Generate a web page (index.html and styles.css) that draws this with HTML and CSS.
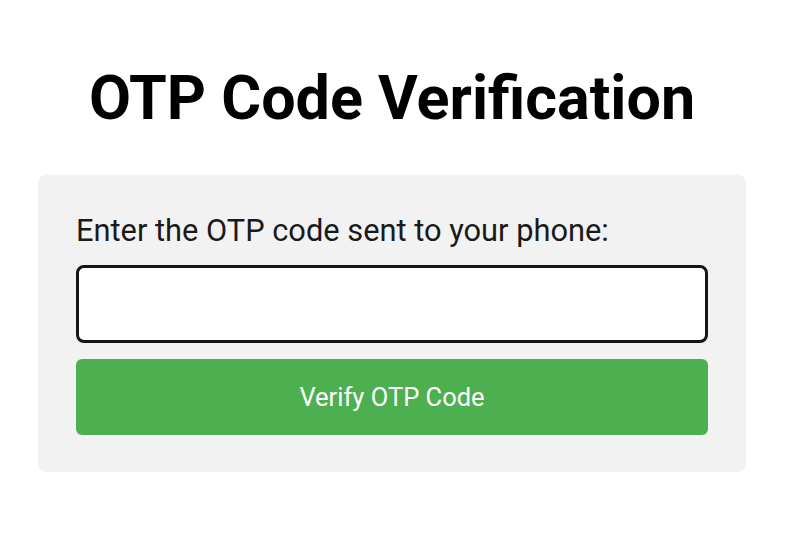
FILE: index.html
```html
<!DOCTYPE html>
<html lang="en">
<head>
  <meta charset="UTF-8">
  <title>OTP Code Verification</title>
  <link rel="stylesheet" href="styles.css">
</head>
<body>
  <div class="page">
    <h1>OTP Code Verification</h1>
    <form class="otp-form">
      <label for="otp">Enter the OTP code sent to your phone:</label>
      <input type="text" id="otp" name="otp">
      <button type="submit">Verify OTP Code</button>
    </form>
  </div>
</body>
</html>
```

FILE: styles.css
```css
body {
  margin: 0;
  font-family: Roboto, "Liberation Sans", sans-serif;
  background: #ffffff;
  color: #000000;
}
.page {
  width: 708px;
  margin-left: 38px;
  padding-top: 61px;
}
h1 {
  margin: 0 0 39px;
  text-align: center;
  font-size: 61px;
  font-weight: 700;
  line-height: 75px;
}
.otp-form {
  display: flex;
  flex-direction: column;
  padding: 38px 38px 37px;
  background: #f2f2f2;
  border-radius: 8px;
}
label {
  font-size: 30.8px;
  line-height: 36px;
  color: #1a1a1a;
  margin-bottom: 16px;
}
input {
  height: 78px;
  box-sizing: border-box;
  border: 3px solid #151515;
  border-radius: 8px;
  background: #ffffff;
  margin-bottom: 16px;
  font-size: 28px;
  padding: 0 16px;
}
button {
  height: 76px;
  border: none;
  border-radius: 6px;
  background: #4caf50;
  color: #ffffff;
  font-family: Roboto, "Liberation Sans", sans-serif;
  font-size: 25.5px;
}
```
